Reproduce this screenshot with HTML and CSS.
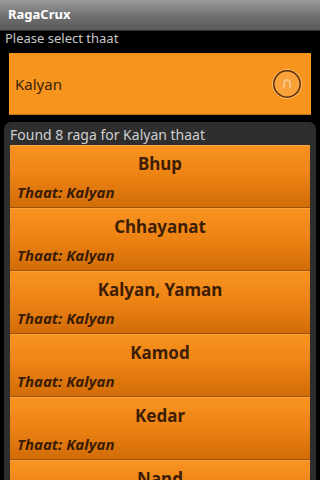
FILE: index.html
```html
<!DOCTYPE html>
<html lang="en">
<head>
    <meta charset="UTF-8">
    <meta name="viewport" content="width=device-width, initial-scale=1.0">
    <title>RagaCrux</title>
    <link rel="stylesheet" href="styles.css">
</head>
<body>
    <div class="title-bar">RagaCrux</div>
    <div class="prompt">Please select thaat</div>
    <div class="spinner">
        <span class="spinner-text">Kalyan</span>
        <svg class="spinner-icon" width="32" height="32" viewBox="0 0 32 32">
            <circle cx="16" cy="16" r="14.5" fill="none" stroke="#fbc27a" stroke-width="1"/>
            <circle cx="16" cy="16" r="13.2" fill="#f9a23a" stroke="#5a2e08" stroke-width="1.5"/>
            <path d="M13 20 V15 a3 3 0 0 1 6 0 V20" fill="none" stroke="#f7c98c" stroke-width="1.6"/>
        </svg>
    </div>
    <div class="panel">
        <div class="panel-head">Found 8 raga for Kalyan thaat</div>
        <div class="raga-list" id="raga-list"></div>
    </div>
<script>
    const ragas = ['Bhup', 'Chhayanat', 'Kalyan, Yaman', 'Kamod', 'Kedar', 'Nand'];
    const list = document.getElementById('raga-list');

    ragas.forEach(name => {
        const item = document.createElement('div');
        item.classList.add('raga');
        item.innerHTML = `<div class="raga-name">${name}</div><div class="raga-thaat">Thaat: Kalyan</div>`;
        list.appendChild(item);
    });
</script>
</body>
</html>
```

FILE: styles.css
```css
body {
    margin: 0;
    padding: 0;
    background-color: #000;
    font-family: 'Noto Sans', 'Open Sans', sans-serif;
    width: 320px;
    height: 480px;
    overflow: hidden;
}
.title-bar {
    height: 30px;
    line-height: 29px;
    padding-left: 8px;
    background: linear-gradient(#9c9c9c, #6e6e6e 55%, #5a5a5a);
    color: #fff;
    font-weight: bold;
    font-size: 13px;
    border-bottom: 1px solid #333;
}
.prompt {
    color: #c8c8c8;
    font-size: 13px;
    padding-left: 5px;
    height: 20px;
    line-height: 15px;
}
.spinner {
    margin: 2px 9px 0 9px;
    height: 61px;
    background-color: #f7941e;
    display: flex;
    align-items: center;
    justify-content: space-between;
    padding: 0 8px 0 6px;
    border-bottom: 1px solid #c66e10;
}
.spinner-text {
    color: #3a1f05;
    font-size: 15px;
}
.spinner-icon {
    display: block;
}
.panel {
    margin: 7px 4px 0 4px;
    background-color: #2e2e2e;
    border-radius: 7px 7px 0 0;
    padding: 0 6px;
    height: 400px;
}
.panel-head {
    color: #cfcfcf;
    font-size: 14px;
    height: 23px;
    line-height: 26px;
}
.raga {
    height: 63px;
    box-sizing: border-box;
    background: linear-gradient(#f79320, #ee8414 45%, #d26c08);
    border-bottom: 1px solid #9e4f05;
    border-top: 1px solid #fba43a;
    padding: 0 7px;
    color: #3d1e05;
}
.raga-name {
    text-align: center;
    font-weight: bold;
    font-size: 17px;
    line-height: 20px;
    padding-top: 8px;
}
.raga-thaat {
    font-weight: bold;
    font-style: italic;
    font-size: 15px;
    line-height: 18px;
    margin-top: 9px;
    color: #3a1c04;
}
```
